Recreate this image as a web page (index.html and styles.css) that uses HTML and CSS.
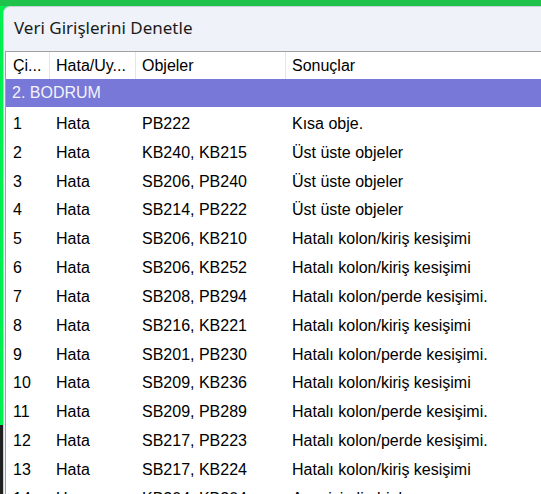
FILE: index.html
```html
<!DOCTYPE html>
<html lang="tr">
<head>
<meta charset="utf-8">
<title>Veri Girişlerini Denetle</title>
<link rel="stylesheet" href="styles.css">
</head>
<body>
<div class="desk">
  <div class="win">
    <div class="titlebar"><span class="title">Veri Girişlerini Denetle</span></div>
    <div class="table">
      <div class="row head">
        <div class="cell">Çi...</div>
        <div class="cell">Hata/Uy...</div>
        <div class="cell">Objeler</div>
        <div class="cell">Sonuçlar</div>
      </div>
      <div class="group">2. BODRUM</div>
      <div class="row"><div class="cell">1</div><div class="cell">Hata</div><div class="cell">PB222</div><div class="cell">Kısa obje.</div></div>
      <div class="row"><div class="cell">2</div><div class="cell">Hata</div><div class="cell">KB240, KB215</div><div class="cell">Üst üste objeler</div></div>
      <div class="row"><div class="cell">3</div><div class="cell">Hata</div><div class="cell">SB206, PB240</div><div class="cell">Üst üste objeler</div></div>
      <div class="row"><div class="cell">4</div><div class="cell">Hata</div><div class="cell">SB214, PB222</div><div class="cell">Üst üste objeler</div></div>
      <div class="row"><div class="cell">5</div><div class="cell">Hata</div><div class="cell">SB206, KB210</div><div class="cell">Hatalı kolon/kiriş kesişimi</div></div>
      <div class="row"><div class="cell">6</div><div class="cell">Hata</div><div class="cell">SB206, KB252</div><div class="cell">Hatalı kolon/kiriş kesişimi</div></div>
      <div class="row"><div class="cell">7</div><div class="cell">Hata</div><div class="cell">SB208, PB294</div><div class="cell">Hatalı kolon/perde kesişimi.</div></div>
      <div class="row"><div class="cell">8</div><div class="cell">Hata</div><div class="cell">SB216, KB221</div><div class="cell">Hatalı kolon/kiriş kesişimi</div></div>
      <div class="row"><div class="cell">9</div><div class="cell">Hata</div><div class="cell">SB201, PB230</div><div class="cell">Hatalı kolon/perde kesişimi.</div></div>
      <div class="row"><div class="cell">10</div><div class="cell">Hata</div><div class="cell">SB209, KB236</div><div class="cell">Hatalı kolon/kiriş kesişimi</div></div>
      <div class="row"><div class="cell">11</div><div class="cell">Hata</div><div class="cell">SB209, PB289</div><div class="cell">Hatalı kolon/perde kesişimi.</div></div>
      <div class="row"><div class="cell">12</div><div class="cell">Hata</div><div class="cell">SB217, PB223</div><div class="cell">Hatalı kolon/perde kesişimi.</div></div>
      <div class="row"><div class="cell">13</div><div class="cell">Hata</div><div class="cell">SB217, KB224</div><div class="cell">Hatalı kolon/kiriş kesişimi</div></div>
      <div class="row"><div class="cell">14</div><div class="cell">Uyarı</div><div class="cell">KB204, KB204</div><div class="cell">Aynı isimli objeler</div></div>
    </div>
  </div>
</div>
</body>
</html>
```
FILE: styles.css
```css
html, body {
  margin: 0;
  padding: 0;
  height: 100%;
  overflow: hidden;
}
body {
  background: linear-gradient(to bottom, #00f050 0, #00f050 425px, #202020 425px);
  font-family: "Liberation Sans", Arial, sans-serif;
}
.desk {
  padding: 6px 0 0 3px;
  height: 100%;
  box-sizing: border-box;
  background: linear-gradient(to bottom, #1fc24a 0, #1fc24a 6px, transparent 6px) no-repeat;
}
.win {
  background: #eff2f8;
  border-left: 1px solid #c8d0d8;
  border-top: 1px solid #c8d0d8;
  border-top-left-radius: 7px;
  height: 100%;
  display: flex;
  flex-direction: column;
}
.titlebar {
  height: 44px;
  box-sizing: border-box;
  padding: 9px 0 0 10px;
  flex: none;
}
.title {
  font-family: "Noto Sans", "Open Sans", sans-serif;
  font-size: 17px;
  line-height: 24px;
  color: #1a1a1a;
}
.table {
  margin-left: 1px;
  background: #ffffff;
  border-top: 1px solid #a0a0a0;
  border-left: 1px solid #a0a0a0;
  flex: 1;
  font-size: 16px;
  color: #000;
}
.row {
  display: grid;
  grid-template-columns: 43px 86px 150px 1fr;
  height: 28.83px;
  box-sizing: border-box;
  padding-top: 5px;
  align-items: center;
}
.row.head {
  height: 27px;
  padding-top: 0;
}
.cell {
  padding-left: 7px;
  white-space: nowrap;
  overflow: hidden;
}
.head .cell {
  height: 100%;
  display: flex;
  align-items: center;
  box-sizing: border-box;
}
.head .cell + .cell {
  border-left: 1px solid #e5e5e5;
  padding-left: 6px;
}
.group {
  background: #7878d8;
  color: #f4f4fa;
  height: 28px;
  display: flex;
  align-items: center;
  padding-left: 6px;
}
```
